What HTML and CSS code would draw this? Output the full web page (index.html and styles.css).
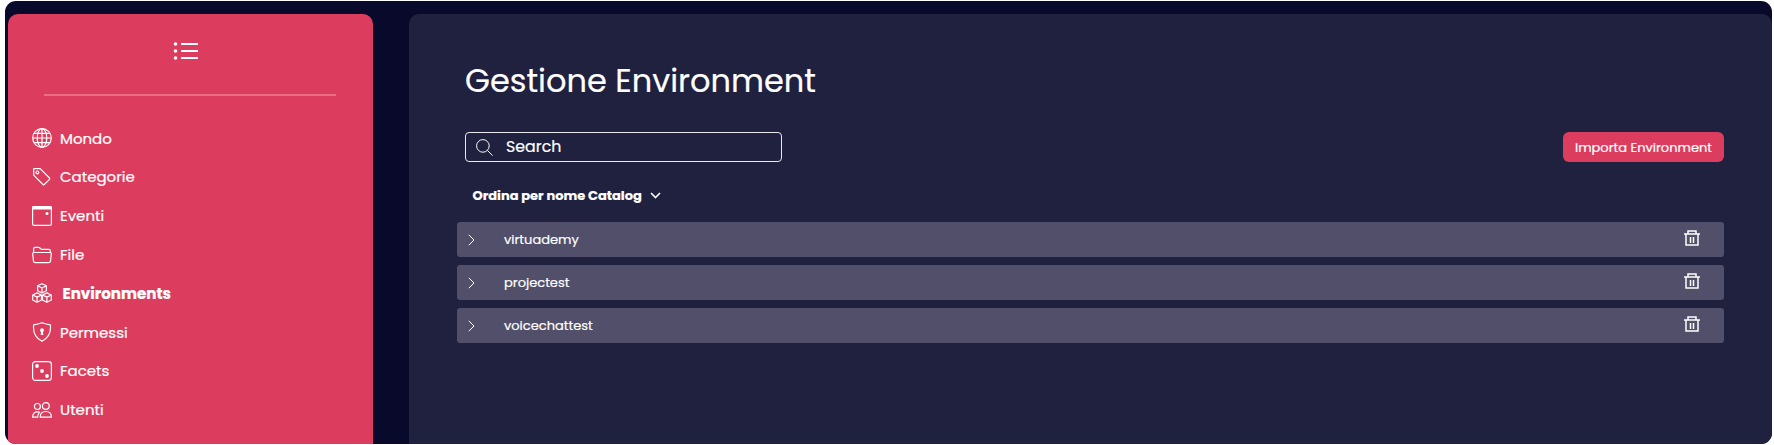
FILE: index.html
```html
<!DOCTYPE html>
<html lang="it">
<head>
<meta charset="utf-8">
<title>Gestione Environment</title>
<link rel="stylesheet" href="styles.css">
</head>
<body>
<div class="shell">
  <aside class="sidebar">
    <svg class="toggle" width="26" height="20" viewBox="0 0 26 20"><g fill="#fff"><circle cx="2.5" cy="3" r="1.8"/><circle cx="2.5" cy="10" r="1.8"/><circle cx="2.5" cy="17" r="1.8"/><path d="M8 2h17v2H8zM8 9h17v2H8zM8 16h17v2H8z"/></g></svg>
    <hr class="divider">
    <nav class="menu">
      <a class="item"><svg class="icon" viewBox="0 0 20 20"><circle cx="10" cy="10" r="9.3"/><ellipse cx="10" cy="10" rx="4.8" ry="9.3"/><path d="M10 .7v18.6M.7 10h18.6M2.3 5.3h15.4M2.3 14.7h15.4"/></svg><span class="label">Mondo</span></a>
      <a class="item"><svg class="icon" viewBox="0 0 20 20"><path d="M1.700 1.700h6.500l9.300 9.300q.6.700 0 1.300l-5.200 5.200q-.7.600-1.300 0L1.700 8.200z"/><circle cx="5.400" cy="5.400" r="1.400"/></svg><span class="label">Categorie</span></a>
      <a class="item"><svg class="icon" viewBox="0 0 20 20"><rect x=".6" y=".6" width="18.8" height="18.8" rx="1.5"/><path class="solid" d="M0 3.400V1.500Q0 0 1.500 0h17Q20 0 20 1.500v1.900z"/><circle class="solid" cx="15" cy="7.500" r="1.500"/></svg><span class="label">Eventi</span></a>
      <a class="item"><svg class="icon" viewBox="0 0 20 20"><path d="M1.600 8V3.800q0-1.400 1.400-1.400h3.500q.8 0 1.400.6l.9.900q.5.500 1.200.5h6.800q1.600 0 1.600 1.600v2M2.200 7.500h15.600q1.700 0 1.500 1.600l-.8 7q-.2 1.600-1.800 1.600H3.300q-1.600 0-1.800-1.600l-.8-7q-.2-1.600 1.500-1.600z"/></svg><span class="label">File</span></a>
      <a class="item active"><svg class="icon" viewBox="0 0 20 20"><path d="M10 .7l4.400 2.100v4.900L10 10 5.600 7.700V2.800zM5.600 2.800 10 5l4.400-2.200M10 5v5M5.100 9.900l4.400 2.100v5L5.100 19.200.7 17v-5zM.7 12l4.400 2.100L9.500 12M5.100 14.100v5.100M14.900 9.900l4.400 2.100v5l-4.400 2.200-4.400-2.200v-5zM10.500 12l4.400 2.100 4.400-2.100M14.900 14.100v5.100"/></svg><span class="label">Environments</span></a>
      <a class="item"><svg class="icon" viewBox="0 0 20 20"><path d="M10 .7Q14 2.200 18.300 2.800 19.800 14 10 19.300.2 14 1.700 2.800 6 2.200 10 .7z"/><circle class="solid" cx="10" cy="8.200" r="1.900"/><path class="solid" d="M9.200 9h1.600l.5 4H8.700z"/></svg><span class="label">Permessi</span></a>
      <a class="item"><svg class="icon" viewBox="0 0 20 20"><rect x=".6" y=".6" width="18.800" height="18.800" rx="2.800"/><g class="solid"><circle cx="5" cy="5" r="1.900"/><circle cx="10" cy="10" r="1.900"/><circle cx="15" cy="15" r="1.900"/></g></svg><span class="label">Facets</span></a>
      <a class="item"><svg class="icon" viewBox="0 0 20 20"><circle cx="13.800" cy="6" r="3.400"/><circle cx="5.400" cy="6.500" r="3"/><path d="M8.200 17.200q0-5.700 5.600-5.700t5.600 5.700zM7.600 12.200Q.7 10.700.6 17.200h5.100q.1-3 1.900-5z"/></svg><span class="label">Utenti</span></a>
    </nav>
  </aside>
  <main class="panel">
    <h1 class="title">Gestione Environment</h1>
    <div class="toolbar">
      <div class="search">
        <svg class="lens" width="17" height="17" viewBox="0 0 17 17"><circle cx="6.900" cy="6.900" r="6.300"/><path d="M11.400 11.400l5.200 5.200"/></svg>
        <span class="placeholder">Search</span>
      </div>
      <button class="import">Importa Environment</button>
    </div>
    <div class="sort"><span>Ordina per nome Catalog</span><svg width="11" height="7" viewBox="0 0 11 7"><path d="M1 1l4.500 4.500L10 1"/></svg></div>
    <div class="list">
      <div class="row"><svg class="chevron" width="7" height="12" viewBox="0 0 7 12"><path d="M.8.800 6 6 .8 11.200"/></svg><span class="name">virtuademy</span><svg class="trash" width="16" height="16" viewBox="0 0 16 16"><path d="M0 4h16M2 4v11h12V4M4 4V1h8v3M6.500 7v6M9.500 7v6"/></svg></div>
      <div class="row"><svg class="chevron" width="7" height="12" viewBox="0 0 7 12"><path d="M.8.800 6 6 .8 11.200"/></svg><span class="name">projectest</span><svg class="trash" width="16" height="16" viewBox="0 0 16 16"><path d="M0 4h16M2 4v11h12V4M4 4V1h8v3M6.500 7v6M9.500 7v6"/></svg></div>
      <div class="row"><svg class="chevron" width="7" height="12" viewBox="0 0 7 12"><path d="M.8.800 6 6 .8 11.200"/></svg><span class="name">voicechattest</span><svg class="trash" width="16" height="16" viewBox="0 0 16 16"><path d="M0 4h16M2 4v11h12V4M4 4V1h8v3M6.500 7v6M9.500 7v6"/></svg></div>
    </div>
  </main>
</div>
</body>
</html>
```
FILE: styles.css
```css
* { box-sizing: border-box; }
body {
  margin: 0;
  height: 445px;
  padding: 1px 2px 1px 5px;
  overflow: hidden;
  background: #fff;
  color: #fff;
  font-family: Poppins, Inter, sans-serif;
}
svg { display: block; flex: none; fill: none; stroke: #fff; }
.shell {
  display: flex;
  gap: 36px;
  height: 443px;
  padding: 13px 0 0 3px;
  border-radius: 11px;
  overflow: hidden;
  background: #09092b;
}
.sidebar {
  width: 365px;
  flex: none;
  padding-top: 27px;
  border-radius: 10px 10px 0 0;
  background: #dc3d5e;
}
.toggle { margin: 0 0 0 165px; stroke: none; }
.divider { width: 292px; height: 2px; margin: 33px 0 0 36px; border: 0; background: #e76f88; }
.menu { margin-top: 22.800px; }
.item { display: flex; align-items: center; height: 38.800px; padding-left: 24px; }
.icon { width: 20px; height: 20px; stroke-width: 1.200; stroke-linejoin: round; }
.solid { fill: #fff; stroke: none; }
.label { margin-left: 8px; padding-top: 1px; font-size: 15px; line-height: 24px; white-space: nowrap; -webkit-text-stroke: 0.2px #fff; }
.active .label { margin-left: 10.500px; font-size: 15.100px; font-weight: 700; }
.panel {
  flex: 1;
  padding: 44px 48px 0;
  border-radius: 10px 10px 0 0;
  background: #20203f;
}
.title { margin: 0 0 0 8px; font-size: 32px; line-height: 46px; font-weight: 400; -webkit-text-stroke: 0.2px #fff; }
.toolbar { display: flex; justify-content: space-between; margin: 28px 0 0 8px; }
.search {
  display: flex;
  align-items: center;
  width: 317px;
  height: 30px;
  padding-left: 9.500px;
  border: 1px solid #e9e9ef;
  border-radius: 4px;
}
.placeholder { margin: 0 0 2px 13.500px; font-size: 15.800px; -webkit-text-stroke: 0.2px #fff; }
.import {
  display: flex;
  justify-content: center;
  align-items: center;
  width: 161px;
  height: 30px;
  padding: 1px 0 0;
  border: 0;
  border-radius: 6px;
  background: #dc3d5e;
  color: #fff;
  font: inherit;
  font-size: 13px;
  -webkit-text-stroke: 0.2px #fff;
}
.sort { display: flex; align-items: center; gap: 8px; height: 20px; margin: 23px 0 0 15.500px; font-size: 13px; font-weight: 700; -webkit-text-stroke: 0.2px #fff; }
.sort span { padding-top: 1px; }
.sort svg { stroke-width: 1.600; }
.list { display: flex; flex-direction: column; gap: 8px; margin-top: 17px; }
.row {
  display: flex;
  align-items: center;
  height: 35px;
  padding: 0 24px 0 11px;
  border-radius: 3px;
  background: #524f6a;
}
.name { margin: 0 auto 0 29px; font-size: 13px; -webkit-text-stroke: 0.2px #fff; }
.trash { margin-top: -3px; stroke-width: 1.500; }
```
